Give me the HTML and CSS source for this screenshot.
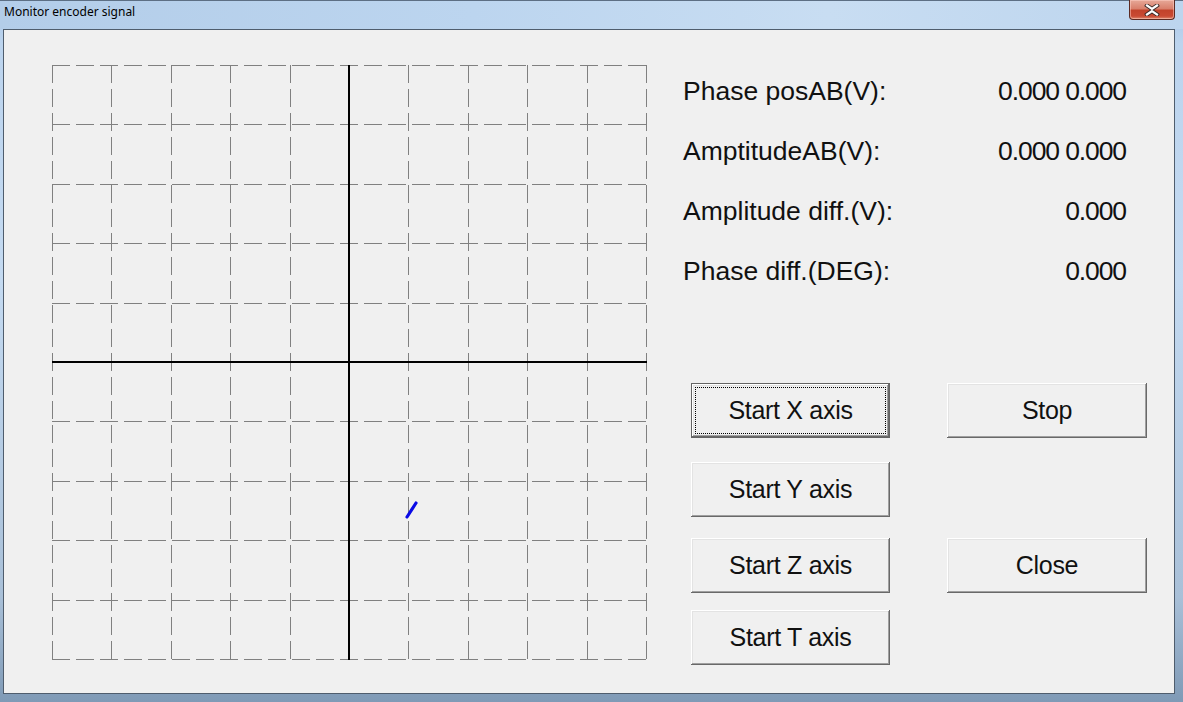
FILE: index.html
```html
<!DOCTYPE html>
<html>
<head>
<meta charset="utf-8">
<title>Monitor encoder signal</title>
<link rel="stylesheet" href="styles.css">
</head>
<body>
<div class="window">
  <div class="titlebar">
    <span class="title">Monitor encoder signal</span>
    <button class="close" aria-label="Close">
      <svg width="16" height="12" viewBox="0 0 16 12">
        <path d="M3 1.5 L8 5 L13 1.5 M3 10.5 L8 7 L13 10.5" fill="none" stroke="#3a2a28" stroke-width="4" stroke-linecap="square"/>
        <path d="M3 1.5 L8 5 L13 1.5 M3 10.5 L8 7 L13 10.5" fill="none" stroke="#ffffff" stroke-width="2.2" stroke-linecap="square"/>
      </svg>
    </button>
  </div>
  <div class="client">
    <svg class="scope" width="596" height="596" viewBox="0 0 596 596" shape-rendering="crispEdges">
      <g stroke="#808080" stroke-width="1" stroke-dasharray="18 6" fill="none">
        <line x1="0.5" y1="0" x2="0.5" y2="595"/>
        <line x1="59.5" y1="0" x2="59.5" y2="595"/>
        <line x1="119.5" y1="0" x2="119.5" y2="595"/>
        <line x1="178.5" y1="0" x2="178.5" y2="595"/>
        <line x1="238.5" y1="0" x2="238.5" y2="595"/>
        <line x1="356.5" y1="0" x2="356.5" y2="595"/>
        <line x1="416.5" y1="0" x2="416.5" y2="595"/>
        <line x1="475.5" y1="0" x2="475.5" y2="595"/>
        <line x1="535.5" y1="0" x2="535.5" y2="595"/>
        <line x1="594.5" y1="0" x2="594.5" y2="595"/>
        <line x1="0" y1="0.5" x2="595" y2="0.5"/>
        <line x1="0" y1="59.5" x2="595" y2="59.5"/>
        <line x1="0" y1="119.5" x2="595" y2="119.5"/>
        <line x1="0" y1="178.5" x2="595" y2="178.5"/>
        <line x1="0" y1="238.5" x2="595" y2="238.5"/>
        <line x1="0" y1="356.5" x2="595" y2="356.5"/>
        <line x1="0" y1="416.5" x2="595" y2="416.5"/>
        <line x1="0" y1="475.5" x2="595" y2="475.5"/>
        <line x1="0" y1="535.5" x2="595" y2="535.5"/>
        <line x1="0" y1="594.5" x2="595" y2="594.5"/>
      </g>
      <g stroke="#000000" stroke-width="2">
        <line x1="297" y1="0" x2="297" y2="595"/>
        <line x1="0" y1="297" x2="595" y2="297"/>
      </g>
      <line x1="355" y1="452" x2="364" y2="438" stroke="#0a0ae6" stroke-width="3.2" stroke-linecap="round" shape-rendering="auto"/>
    </svg>
    <div class="panel">
      <div class="readouts">
        <div class="row"><span>Phase posAB(V):</span><span class="val">0.000 0.000</span></div>
        <div class="row"><span>AmptitudeAB(V):</span><span class="val">0.000 0.000</span></div>
        <div class="row"><span>Amplitude diff.(V):</span><span class="val">0.000</span></div>
        <div class="row"><span>Phase diff.(DEG):</span><span class="val">0.000</span></div>
      </div>
      <div class="buttons">
        <button class="btn default">Start X axis</button>
        <button class="btn">Stop</button>
        <button class="btn">Start Y axis</button>
        <span></span>
        <button class="btn">Start Z axis</button>
        <button class="btn">Close</button>
        <button class="btn">Start T axis</button>
        <span></span>
      </div>
    </div>
  </div>
</div>
</body>
</html>
```
FILE: styles.css
```css
html, body {
  margin: 0;
  padding: 0;
  width: 1183px;
  height: 702px;
  overflow: hidden;
}

.window {
  width: 1183px;
  height: 702px;
  box-sizing: border-box;
  display: flex;
  flex-direction: column;
  background: linear-gradient(to bottom, #a8c5e6 0%, #bcd4ee 6%, #c4daf1 40%, #a9c0d8 85%, #7f9ab6 100%);
  border-top: 1px solid #5d6f84;
}

.titlebar {
  height: 28px;
  display: flex;
  justify-content: space-between;
  align-items: flex-start;
  padding-left: 4px;
  background: linear-gradient(to right, #b3cde9 0%, #bcd5ef 40%, #c8ddf2 70%, #bdd5ee 100%);
}

.title {
  font-family: "Noto Sans", "DejaVu Sans", sans-serif;
  font-size: 12px;
  line-height: 14px;
  margin-top: 4px;
  color: #000;
}

.close {
  width: 46px;
  height: 20px;
  margin-top: -1px;
  margin-right: 8px;
  padding: 0;
  display: flex;
  align-items: center;
  justify-content: center;
  border: 1px solid #5b2a22;
  border-top: none;
  border-radius: 0 0 4px 4px;
  background: linear-gradient(to bottom, #e6a898 0%, #d9806c 45%, #c2432b 55%, #c94a33 85%, #de8a6e 100%);
  box-shadow: inset 0 0 0 1px rgba(255, 210, 200, 0.5);
}

.client {
  flex: 1;
  margin: 0 8px 8px 3px;
  border: 1px solid #4f5d6d;
  background: #f0f0f0;
  display: flex;
  align-items: flex-start;
  padding: 31px 0 0 48px;
}

.scope {
  display: block;
  margin-top: 4px;
  flex: none;
}

.panel {
  margin-left: 35px;
  width: 464px;
  font-family: "Liberation Sans", Arial, sans-serif;
  color: #000;
}

.readouts {
  width: 443px;
}

.row {
  display: flex;
  justify-content: space-between;
  font-size: 26.5px;
  line-height: 60px;
  height: 60px;
  color: #111;
}

.val {
  letter-spacing: -1.1px;
}

.buttons {
  margin-top: 82px;
  margin-left: 8px;
  display: grid;
  grid-template-columns: 199px 200px;
  column-gap: 57px;
  grid-template-rows: 55px 79px 76px 72px;
  align-items: end;
}

.btn {
  height: 55px;
  padding: 0;
  border: none;
  background: #f0f0f0;
  font-family: "Liberation Sans", Arial, sans-serif;
  font-size: 25px;
  letter-spacing: -0.3px;
  color: #111;
  position: relative;
  box-shadow:
    inset -1px -1px 0 #696969,
    inset 1px 1px 0 #ffffff,
    inset -2px -2px 0 #a0a0a0,
    inset 2px 2px 0 #e3e3e3;
}

.btn.default {
  box-shadow:
    inset 0 0 0 1px #646464,
    inset -2px -2px 0 #696969,
    inset 2px 2px 0 #ffffff,
    inset -3px -3px 0 #a0a0a0,
    inset 3px 3px 0 #e3e3e3;
}

.btn.default::after {
  content: "";
  position: absolute;
  left: 4px;
  top: 4px;
  right: 4px;
  bottom: 4px;
  border: 1px dotted #000;
}
```
